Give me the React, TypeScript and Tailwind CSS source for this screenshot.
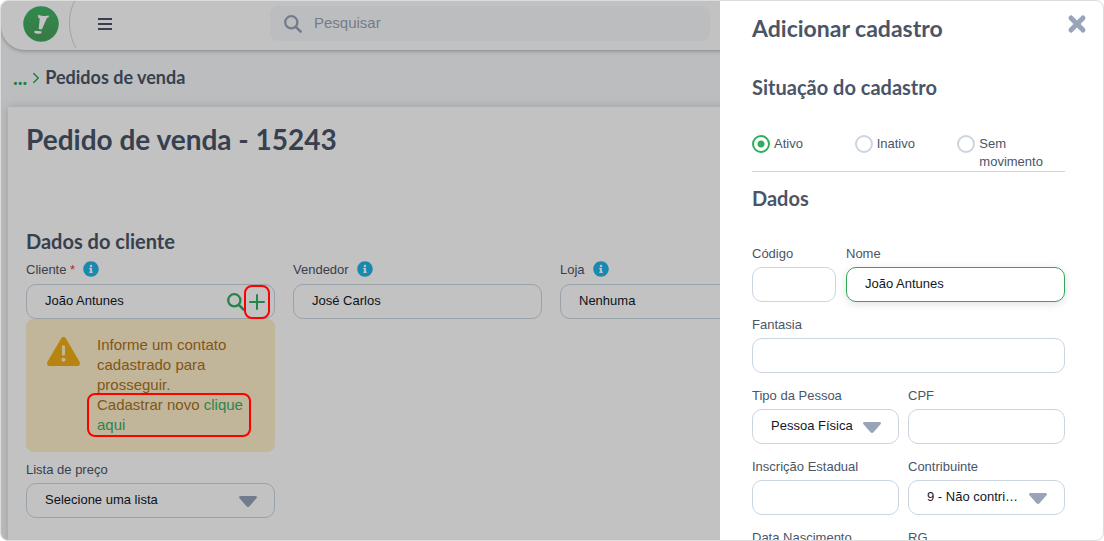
import { useState } from "react";
import type { ReactNode } from "react";
import { FaInfoCircle } from "react-icons/fa";
import { FaTriangleExclamation } from "react-icons/fa6";
import { ChevronRight, Plus, X } from "lucide-react";

const fieldBase =
  "h-[35px] w-full min-w-0 rounded-[10px] border bg-white px-[18px] pb-[2px] text-[13px] text-gray-900 outline-none";

const heading = "font-['Lato','Open_Sans',sans-serif] font-bold";

// ─── Icons ────────────────────────────────────────────────────────────────────
function SearchIcon({ className = "" }: { className?: string }) {
  return (
    <svg viewBox="0 0 18 18" className={`h-[18px] w-[18px] ${className}`} fill="none" stroke="currentColor">
      <circle cx="7.3" cy="7.3" r="6.1" strokeWidth="2.300" />
      <path d="M11.800 11.800l4.800 4.800" strokeWidth="2.600" strokeLinecap="round" />
    </svg>
  );
}

function MenuIcon() {
  return (
    <svg viewBox="0 0 14 12" className="h-3 w-[14px]" fill="currentColor">
      <path d="M0 0h14v2H0zM0 5h14v2H0zM0 10h14v2H0z" />
    </svg>
  );
}

function Logo() {
  return (
    <svg viewBox="0 0 36 36" className="h-9 w-9">
      <defs>
        <linearGradient id="brand" x1="0" y1="0" x2="0" y2="1">
          <stop offset="0" stopColor="#40b567" />
          <stop offset="1" stopColor="#4ba05b" />
        </linearGradient>
      </defs>
      <circle cx="18" cy="18" r="17.800" fill="#3ab867" />
      <circle cx="18" cy="18" r="16.800" fill="url(#brand)" />
      <path
        d="M15.300 8.800c3.200 1.300 7 1.700 10.700.8l-.5 1.800-1.600.7-5 11.300-3.200-.4 1-10.600-1.700-.9z"
        fill="#fff"
      />
      <path d="M11.400 24.800c2.300.5 5.300.1 7.400.8l-.6 2c-2.200.3-5.100.3-6.800-.8z" fill="#fff" />
    </svg>
  );
}

// ─── Form pieces ──────────────────────────────────────────────────────────────
interface FieldProps {
  id: string;
  label: string;
  required?: boolean;
  info?: boolean;
  children: ReactNode;
}

function Field({ id, label, required, info, children }: FieldProps) {
  return (
    <div className="min-w-0">
      <div className={`mb-1 flex items-start gap-2 ${info ? "h-[19px]" : "h-[18px]"}`}>
        <label htmlFor={id} className="text-[13px] leading-[18px] text-[#4a5568]">
          {label}
          {required && <span className="text-red-500"> *</span>}
        </label>
        {info && <FaInfoCircle size={16} className="text-[#22b4e6]" />}
      </div>
      {children}
    </div>
  );
}

interface TextProps {
  id: string;
  value?: string;
  active?: boolean;
}

function TextInput({ id, value = "", active }: TextProps) {
  return (
    <input
      id={id}
      type="text"
      defaultValue={value}
      className={`${fieldBase} ${active ? "border-[#2fa85a] shadow-[0_2px_8px_rgba(0,0,0,0.12)]" : "border-[#cbd5e0]"}`}
    />
  );
}

function SelectInput({ id, options }: { id: string; options: string[] }) {
  return (
    <div className="relative">
      <select id={id} className={`${fieldBase} appearance-none truncate border-[#cbd5e0] pr-10`}>
        {options.map((o) => (
          <option key={o}>{o}</option>
        ))}
      </select>
      <svg
        viewBox="0 0 18 11"
        className="pointer-events-none absolute right-[18px] top-[13px] h-[11px] w-[18px] text-[#98a4b9]"
      >
        <path
          d="M1.400 0h15.200c1.300 0 1.800 1.400.9 2.300L10.500 10.200c-.8.900-2.200.900-3 0L.5 2.300C-.4 1.400.1 0 1.400 0z"
          fill="currentColor"
        />
      </svg>
    </div>
  );
}

// ─── Page ─────────────────────────────────────────────────────────────────────
function TopBar() {
  return (
    <header className="flex h-[49px] items-center rounded-bl-[24px] bg-white pb-1 pl-[22px] shadow-[0_1px_4px_rgba(0,0,0,0.3)]">
      <Logo />
      <svg viewBox="0 0 10 49" className="ml-[9px] h-[49px] w-[10px]" fill="none">
        <path d="M6.500 2C-.5 17-.5 34 8.500 50" stroke="#d3d5dc" />
      </svg>
      <button type="button" aria-label="Menu" className="ml-5 text-[#4a5568]">
        <MenuIcon />
      </button>
      <div className="ml-[158px] flex h-[35px] w-[440px] items-center gap-3 rounded-lg bg-[#f8f9fb] px-[14px]">
        <SearchIcon className="text-[#98a4b9]" />
        <input
          type="search"
          aria-label="Pesquisar"
          placeholder="Pesquisar"
          className="min-w-0 flex-1 bg-transparent text-[15px] outline-none placeholder:text-[#98a4b9]"
        />
      </div>
    </header>
  );
}

function OrderPage() {
  return (
    <div className="bg-[#f8f9fc]">
      <TopBar />

      <nav className="flex h-[57px] items-center px-3 pb-1">
        <a href="#" className={`${heading} text-xl leading-6 text-[#22ab56]`}>
          ...
        </a>
        <ChevronRight size={18} strokeWidth={2} className="mt-[2px] text-[#22ab56]" />
        <a href="#" className={`${heading} text-lg leading-6 text-[#4a5568]`}>
          Pedidos de venda
        </a>
      </nav>

      <main className="mx-[7px] min-h-screen bg-white pl-[18px] pr-5 pt-3 shadow-[0_0_10px_rgba(0,0,0,0.16)]">
        <h1 className={`${heading} text-[28px] leading-10 text-[#4a5568]`}>Pedido de venda - 15243</h1>

        <h2 className={`${heading} mt-[70px] text-xl leading-6 text-[#4a5568]`}>Dados do cliente</h2>

        <div className="mt-2 grid grid-cols-4 items-start gap-[18px]">
          <div>
            <Field id="cliente" label="Cliente" required info>
              <div className="relative">
                <TextInput id="cliente" value="João Antunes" />
                <div className="absolute right-[6px] top-[6px] flex items-center text-[#2fae66]">
                  <button type="button" aria-label="Buscar cliente">
                    <SearchIcon />
                  </button>
                  <button type="button" aria-label="Adicionar cliente">
                    <Plus size={24} strokeWidth={2} />
                  </button>
                </div>
                <span className="pointer-events-none absolute right-[5px] top-px z-20 h-[34px] w-[26px] rounded-lg border-2 border-[#ff0000]" />
              </div>
            </Field>

            <div className="mb-[9px] flex gap-[17px] rounded-lg bg-[#feefc9] pb-[17px] pl-[21px] pr-6 pt-4">
              <FaTriangleExclamation size={33} className="shrink-0 text-[#f4ac15]" />
              <div className="text-[15px] leading-5 text-[#ad711c]">
                <p>Informe um contato cadastrado para prosseguir.</p>
                <p className="relative">
                  Cadastrar novo{" "}
                  <a href="#" className="text-[#3cae68]">
                    clique aqui
                  </a>
                  <span className="pointer-events-none absolute -inset-y-[2px] -left-[10px] right-0 z-20 rounded-lg border-2 border-[#ff0000]" />
                </p>
              </div>
            </div>

            <Field id="lista" label="Lista de preço">
              <SelectInput id="lista" options={["Selecione uma lista"]} />
            </Field>
          </div>

          <Field id="vendedor" label="Vendedor" info>
            <TextInput id="vendedor" value="José Carlos" />
          </Field>
          <Field id="loja" label="Loja" info>
            <SelectInput id="loja" options={["Nenhuma"]} />
          </Field>
        </div>
      </main>
    </div>
  );
}

// ─── Drawer ───────────────────────────────────────────────────────────────────
const STATUSES = ["Ativo", "Inativo", "Sem movimento"];

function Drawer() {
  const [status, setStatus] = useState("Ativo");

  return (
    <aside className="absolute inset-y-0 right-0 z-30 w-[383px] max-w-full overflow-hidden bg-white pl-8 pr-[38px]">
      <div className="flex h-[54px] items-center justify-between">
        <h2 className={`${heading} text-[23px] leading-8 text-[#4a5568]`}>Adicionar cadastro</h2>
        <button type="button" aria-label="Fechar" className="-mr-6 mb-2 text-[#98a4b9]">
          <X size={24} strokeWidth={5} />
        </button>
      </div>

      <h3 className={`${heading} mt-5 text-xl leading-6 text-[#4a5568]`}>Situação do cadastro</h3>

      <fieldset className="mt-9 grid grid-cols-3 border-b border-[#cbd5e0] pr-[5px]">
        {STATUSES.map((s) => (
          <label key={s} className="flex items-start gap-1 text-[13px] leading-[18px] text-[#4a5568]">
            <input
              type="radio"
              name="situacao"
              checked={status === s}
              onChange={() => setStatus(s)}
              className="h-[18px] w-[18px] shrink-0 appearance-none rounded-full border-2 border-[#cbd5e0] bg-white checked:border-[#2fae5c] checked:bg-[radial-gradient(circle,#2fae5c_3px,#fff_4px)]"
            />
            {s}
          </label>
        ))}
      </fieldset>

      <h3 className={`${heading} mt-[14px] text-xl leading-6 text-[#4a5568]`}>Dados</h3>

      <div className="mt-[35px] flex flex-col gap-[14px]">
        <div className="grid grid-cols-[84px_1fr] gap-[10px]">
          <Field id="codigo" label="Código">
            <TextInput id="codigo" />
          </Field>
          <Field id="nome" label="Nome">
            <TextInput id="nome" value="João Antunes" active />
          </Field>
        </div>
        <Field id="fantasia" label="Fantasia">
          <TextInput id="fantasia" />
        </Field>
        <div className="grid grid-cols-[147px_1fr] gap-x-[9px] gap-y-[14px]">
          <Field id="tipo" label="Tipo da Pessoa">
            <SelectInput id="tipo" options={["Pessoa Física", "Pessoa Jurídica"]} />
          </Field>
          <Field id="cpf" label="CPF">
            <TextInput id="cpf" />
          </Field>
          <Field id="ie" label="Inscrição Estadual">
            <TextInput id="ie" />
          </Field>
          <Field id="contribuinte" label="Contribuinte">
            <SelectInput id="contribuinte" options={["9 - Não contribuinte"]} />
          </Field>
          <Field id="nascimento" label="Data Nascimento">
            <TextInput id="nascimento" />
          </Field>
          <Field id="rg" label="RG">
            <TextInput id="rg" />
          </Field>
        </div>
      </div>
    </aside>
  );
}

export default function App() {
  return (
    <div className="relative h-screen overflow-hidden rounded-lg border border-[#dcdcdc] font-['Liberation_Sans',Arial,sans-serif]">
      <OrderPage />
      <div className="absolute inset-0 z-10 bg-black/24" />
      <Drawer />
    </div>
  );
}
